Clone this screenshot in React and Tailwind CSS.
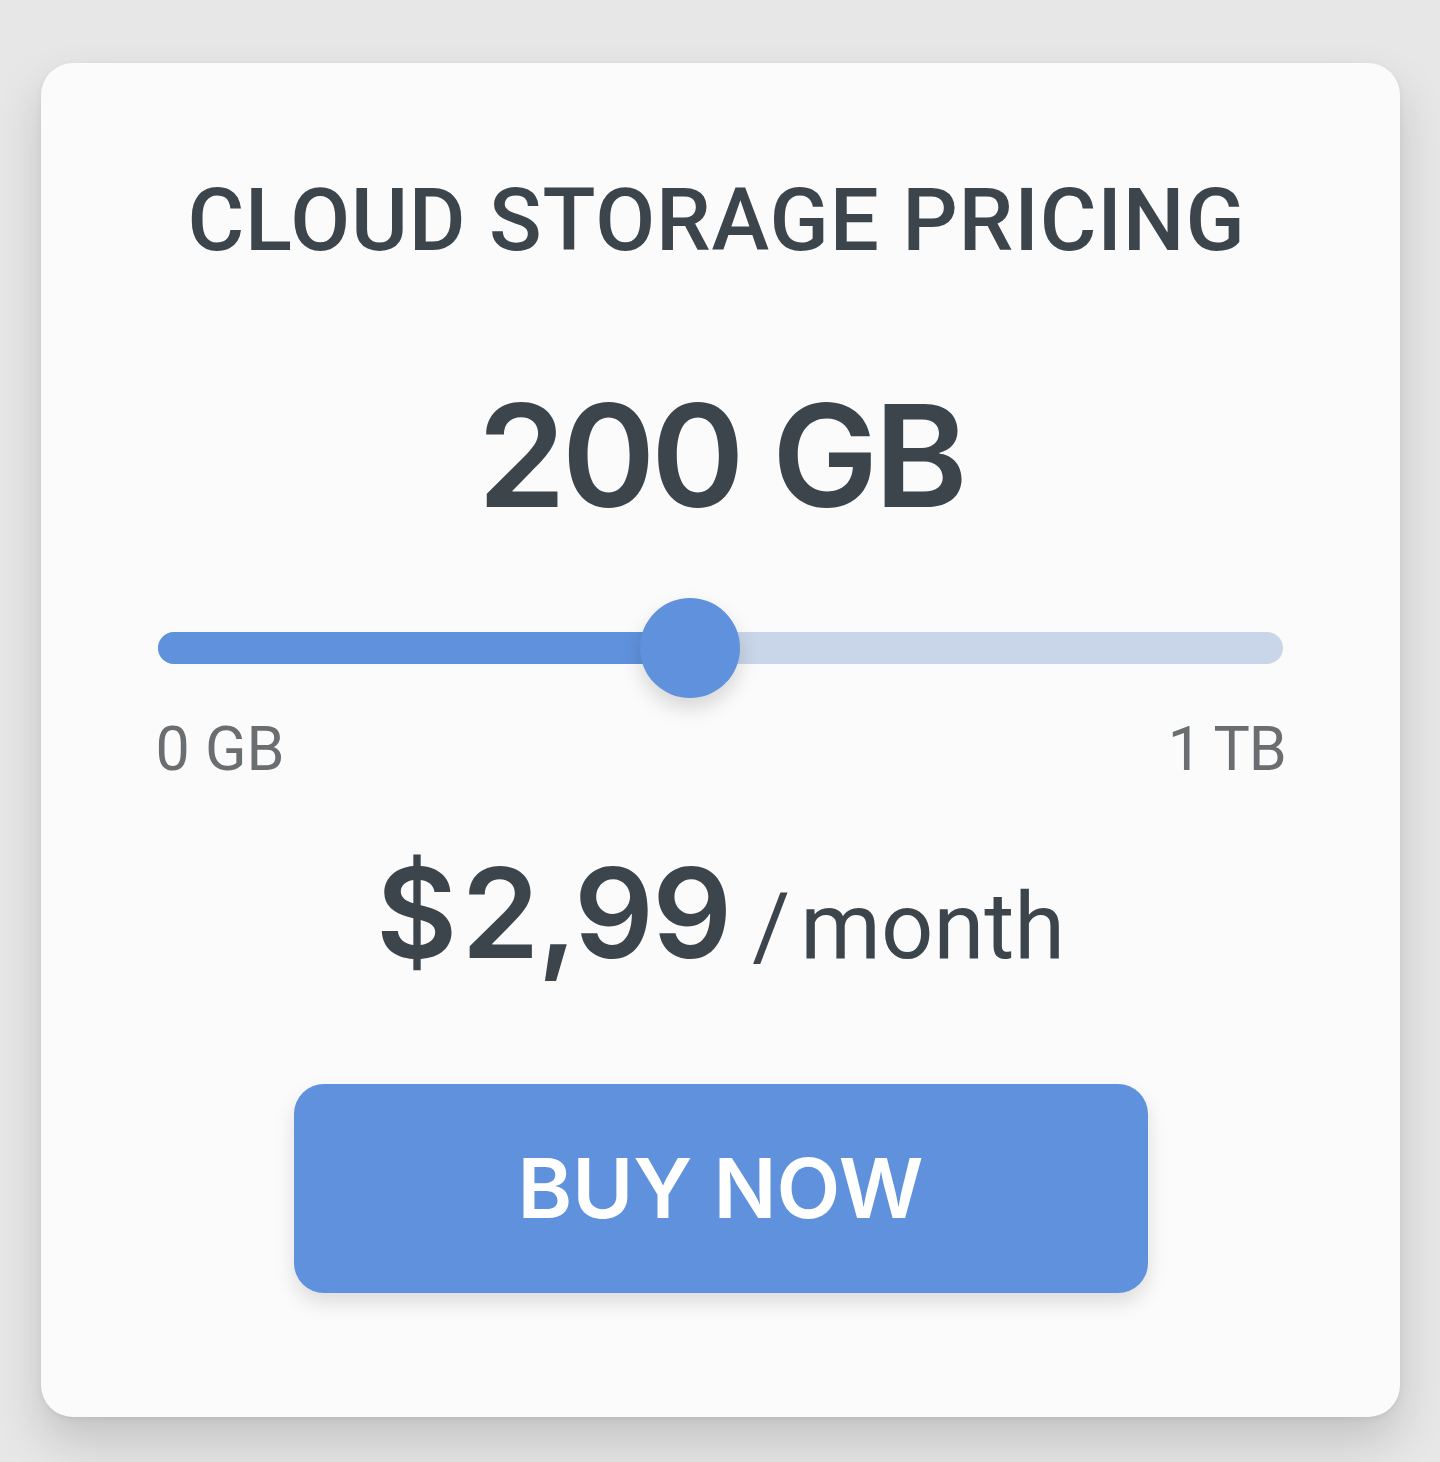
export default function App() {
  return (
    <div
      className="w-[1440px] h-[1462px] bg-[#e7e7e7] pt-[63px] pl-[41px]"
      style={{ fontFamily: "Roboto, 'Noto Sans', sans-serif" }}
    >
      <div className="w-[1359px] h-[1354px] bg-[#fbfbfb] rounded-[32px] shadow-[0_24px_48px_rgba(0,0,0,0.16),0_2px_6px_rgba(0,0,0,0.06)] flex flex-col items-center">
        <h1 className="mt-[107px] mr-[8px] h-[100px] text-[87px] leading-[100px] font-medium text-[#3d454c] tracking-[0.01em] whitespace-nowrap">
          CLOUD STORAGE PRICING
        </h1>
        <div className="mt-[105px] h-[160px] text-[142px] leading-[160px] font-semibold text-[#3d454c] tracking-[-0.03em] font-['Inter',sans-serif]">
          200 GB
        </div>
        <div className="mt-[63px] w-[1125px] relative h-[100px] flex items-center">
          <div className="w-full h-[32px] rounded-full bg-[#c9d6e9] flex">
            <div className="w-[532px] h-full rounded-full bg-[#5f91dc]" />
          </div>
          <div className="absolute left-[482px] top-0 w-[100px] h-[100px] rounded-full bg-[#5f91dc] shadow-[0_10px_20px_rgba(0,0,0,0.15)]" />
        </div>
        <div className="mt-[16px] h-[70px] w-[1130px] flex justify-between text-[61px] leading-[70px] text-[#6b6e70]">
          <span>0 GB</span>
          <span className="tracking-[-0.02em]">1 TB</span>
        </div>
        <div className="mt-[54px] h-[150px] flex items-baseline text-[#3d454c]">
          <span className="text-[125px] leading-[150px] font-semibold tracking-[-0.015em] font-['Inter',sans-serif]">
            $<span className="ml-[6px]">2,99</span>
          </span>
          <span className="ml-[22px] text-[92px] leading-[110px]">/</span>
          <span className="ml-[10px] text-[92px] leading-[110px]">month</span>
        </div>
        <button className="mt-[96px] w-[854px] h-[209px] rounded-[30px] bg-[#5f91dc] shadow-[0_10px_20px_rgba(0,0,0,0.12)] text-white text-[83px] font-semibold font-['Inter',sans-serif]">
          BUY NOW
        </button>
      </div>
    </div>
  );
}
